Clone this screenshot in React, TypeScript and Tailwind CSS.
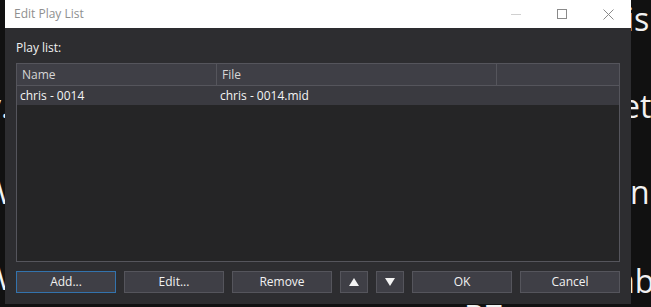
import React from 'react';

const ui = { fontFamily: '"Open Sans", "Noto Sans", sans-serif' };

const Btn: React.FC<{ label?: React.ReactNode; w: string; focused?: boolean }> = ({ label, w, focused }) => (
  <button
    className={`${w} h-[22px] flex items-center justify-center bg-[#3f3f46] text-[12px] text-[#f1f1f1] border ${
      focused ? 'border-[#3373ad]' : 'border-[#55555c]'
    }`}
  >
    {label}
  </button>
);

const Tri: React.FC<{ down?: boolean }> = ({ down }) => (
  <svg width="10" height="8" viewBox="0 0 10 8">
    <path d={down ? 'M0 0 L10 0 L5 8 Z' : 'M5 0 L10 8 L0 8 Z'} fill="#f4f4f4" />
  </svg>
);

export default function App() {
  return (
    <div className="relative w-[651px] h-[307px] overflow-hidden bg-[#111111]" style={ui}>
      {/* app text showing behind the dialog */}
      <div className="absolute inset-0 text-[32px] leading-none text-[#f2f2f2]">
        <span className="absolute left-[626px] top-[3px]">is</span>
        <span className="absolute left-[622px] top-[90px]">et</span>
        <span className="absolute left-[630px] top-[176px]">n</span>
        <span className="absolute left-[617px] top-[265px]">ab</span>
        <span className="absolute left-[-15px] top-[90px]">y.</span>
        <span className="absolute left-[-17px] top-[176px]">W</span>
        <span className="absolute left-[-17px] top-[262px]">W</span>
        <span className="absolute left-[464px] top-[301px]">B7</span>
      </div>

      <div className="absolute left-[5px] top-0 w-[626px] h-[304px] flex flex-col bg-[#2d2d30]">
        <div className="h-[28px] bg-white flex items-center">
          <span className="ml-[9px] text-[12px] text-[#8f8f8f]">Edit Play List</span>
          <div className="ml-auto flex h-full">
            <div className="w-[46px] flex items-center justify-center">
              <div className="w-[10px] h-px bg-[#d0d0d0]" />
            </div>
            <div className="w-[46px] flex items-center justify-center">
              <div className="w-[10px] h-[10px] border border-[#8a8a8a]" />
            </div>
            <div className="w-[46px] flex items-center justify-center">
              <svg width="11" height="11" viewBox="0 0 11 11">
                <path d="M0.5 0.5 L10.5 10.5 M10.5 0.5 L0.5 10.5" stroke="#8a8a8a" strokeWidth="1" />
              </svg>
            </div>
          </div>
        </div>

        <div className="flex-1 flex flex-col px-[11px]">
          <div className="h-[35px] pt-[12px] text-[12px] text-[#f1f1f1] leading-[16px]">Play list:</div>

          <div className="h-[199px] border border-[#55555c] bg-[#252526] flex flex-col">
            <div className="h-[22px] flex bg-[#3f3f46] border-b border-[#55555c] text-[12px] text-[#d6d6d6]">
              <div className="w-[200px] border-r border-[#55555c] pl-[5px] flex items-center">Name</div>
              <div className="w-[280px] border-r border-[#55555c] pl-[5px] flex items-center">File</div>
              <div className="flex-1" />
            </div>
            <div className="h-[19px] flex bg-[#3a3a40] text-[12px] text-[#f4f4f4] items-center">
              <div className="w-[200px] pl-[3px]">chris - 0014</div>
              <div className="pl-[3px]">chris - 0014.mid</div>
            </div>
          </div>

          <div className="mt-[9px] flex gap-[8px]">
            <Btn w="w-[100px]" label="Add..." focused />
            <Btn w="w-[100px]" label="Edit..." />
            <Btn w="w-[100px]" label="Remove" />
            <Btn w="w-[28px]" label={<Tri />} />
            <Btn w="w-[28px]" label={<Tri down />} />
            <Btn w="w-[100px]" label="OK" />
            <Btn w="w-[100px]" label="Cancel" />
          </div>
        </div>
      </div>
    </div>
  );
}
